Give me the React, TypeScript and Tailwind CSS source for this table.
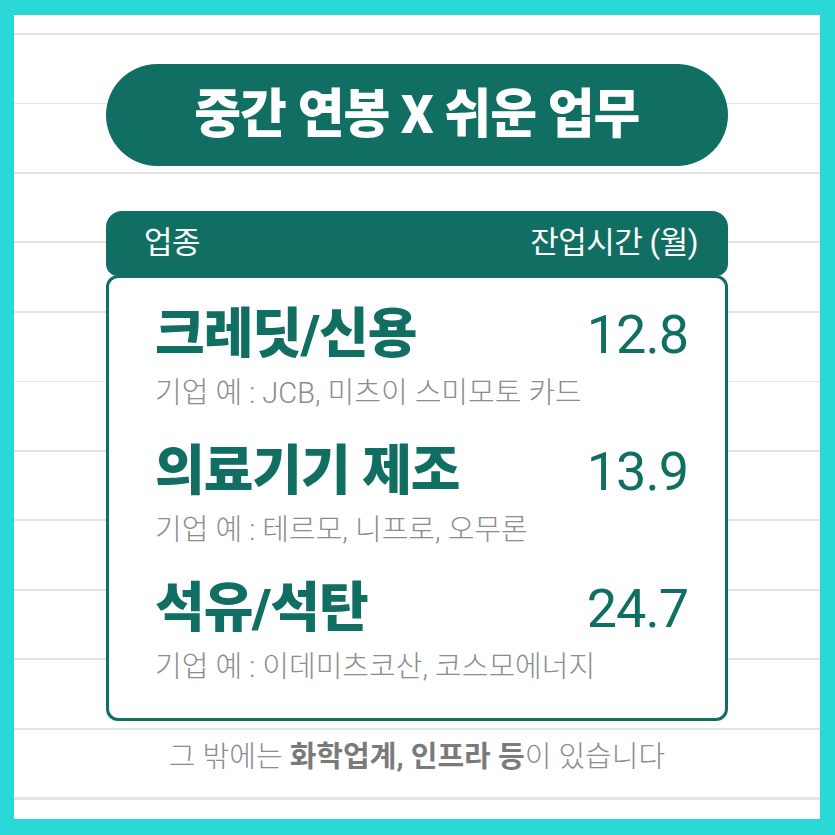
const rows = [
  { name: '크레딧/신용', hours: '12.8', companies: '기업 예 : JCB, 미츠이 스미모토 카드' },
  { name: '의료기기 제조', hours: '13.9', companies: '기업 예 : 테르모, 니프로, 오무론' },
  { name: '석유/석탄', hours: '24.7', companies: '기업 예 : 이데미츠코산, 코스모에너지' },
];

export default function App() {
  return (
    <div className="w-[835px] h-[835px] bg-[#2bd8d8] pt-[15px] pb-[16px] pl-[14px] pr-[15px] font-['Roboto','Noto_Sans_CJK_KR',sans-serif]">
      <div className="h-full w-full bg-white bg-[repeating-linear-gradient(to_bottom,transparent_0px,transparent_18px,#e3e3e3_18px,#e3e3e3_20px,transparent_20px,transparent_69.5px)] flex flex-col items-center">
        {/* title pill */}
        <div className="mt-[49px] w-[622px] h-[102px] rounded-full bg-[#106e62] flex items-center justify-center">
          <span className="inline-block scale-x-[0.96] text-white font-black text-[53px] leading-none tracking-[-1px]">
            중간 연봉 X 쉬운 업무
          </span>
        </div>

        {/* table */}
        <div className="mt-[45px] w-[622px]">
          <div className="h-[65px] rounded-t-[16px] rounded-b-[12px] bg-[#106e62] flex items-center justify-between pl-[38px] pr-[30px] text-white text-[31px] tracking-[-0.5px]">
            <span>업종</span>
            <span>잔업시간 (월)</span>
          </div>
          <div className="-mt-[1px] h-[446px] rounded-[12px] border-[3px] border-[#106e62] bg-white pt-[28px] pl-[46px] pr-[37px]">
            {rows.map((r, i) => (
              <div key={r.name} className={i > 0 ? 'mt-[33px]' : ''}>
                <div className="flex items-center justify-between h-[58px]">
                  <span className="text-[#106e62] font-black text-[54px] leading-none tracking-[-1px]">{r.name}</span>
                  <span className="text-[#106e62] text-[54px] leading-none tracking-[-1px]">{r.hours}</span>
                </div>
                <div className="mt-[12px] h-[34px] flex items-center text-[#8c8c8c] font-light text-[29px] leading-none">
                  {r.companies}
                </div>
              </div>
            ))}
          </div>
        </div>

        <p className="mt-[22px] text-[29px] text-[#8c8c8c] font-light leading-none">
          그 밖에는 <b className="font-bold text-[#7a7a7a]">화학업계, 인프라 등</b>이 있습니다
        </p>
      </div>
    </div>
  );
}
